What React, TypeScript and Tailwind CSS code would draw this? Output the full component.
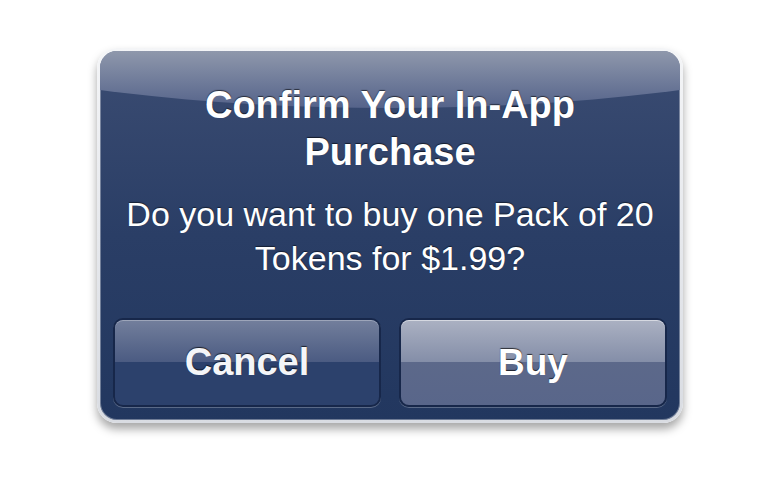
export default function App() {
  return (
    <div className="w-[780px] h-[486px] bg-white flex items-start justify-center pt-[48px] font-['Liberation_Sans',Arial,sans-serif]">
      <div className="w-[586px] h-[375px] rounded-[20px] bg-gradient-to-b from-[#f4f5f7] to-[#d9dce2] p-[3px] shadow-[0_6px_10px_rgba(0,0,0,0.35)]">
        <div className="relative w-full h-full rounded-[17px] overflow-hidden bg-gradient-to-b from-[#3b4c72] via-[#2a3e66] to-[#22375f] shadow-[inset_0_0_0_1px_rgba(255,255,255,0.35)]">
          {/* gloss */}
          <div className="absolute left-[-410px] w-[1400px] top-[-343px] h-[400px] rounded-[50%] bg-gradient-to-b from-[#8e97ab] from-[86%] to-[#55638a]" />
          <div className="relative flex flex-col items-center h-full">
            <h1 className="mt-[31px] w-[480px] text-center text-white font-bold text-[38px] leading-[47px] [text-shadow:0_-1px_1px_rgba(0,0,0,0.6)]">
              Confirm Your In-App Purchase
            </h1>
            <p className="mt-[16px] text-center text-white text-[34px] leading-[44px] [text-shadow:0_-1px_1px_rgba(0,0,0,0.5)]">
              Do you want to buy one Pack of 20
              <br />
              Tokens for $1.99?
            </p>
            <div className="mt-auto mb-[13px] w-full flex gap-[18px] px-[13px]">
              <button className="relative flex-1 h-[89px] rounded-[10px] border-2 border-[#17274a] overflow-hidden bg-[#2c416c] shadow-[0_1px_0_rgba(255,255,255,0.25)]">
                <div className="absolute inset-x-0 top-0 h-[42px] bg-gradient-to-b from-[#737f9c] to-[#4b5b82]" />
                <div className="absolute inset-0 rounded-[8px] shadow-[inset_0_1px_0_rgba(255,255,255,0.3)]" />
                <span className="relative text-[#f4f5f8] font-bold text-[38px] [text-shadow:0_-1px_1px_rgba(0,0,0,0.7)]">
                  Cancel
                </span>
              </button>
              <button className="relative flex-1 h-[89px] rounded-[10px] border-2 border-[#17274a] overflow-hidden bg-gradient-to-b from-[#5f6b8a] to-[#59668a] shadow-[0_1px_0_rgba(255,255,255,0.25)]">
                <div className="absolute inset-x-0 top-0 h-[42px] bg-gradient-to-b from-[#abb1c2] to-[#848ea8]" />
                <div className="absolute inset-0 rounded-[8px] shadow-[inset_0_1px_0_rgba(255,255,255,0.5)]" />
                <span className="relative text-white font-bold text-[37px] [text-shadow:0_-1px_1px_rgba(0,0,0,0.7)]">
                  Buy
                </span>
              </button>
            </div>
          </div>
        </div>
      </div>
    </div>
  )
}
